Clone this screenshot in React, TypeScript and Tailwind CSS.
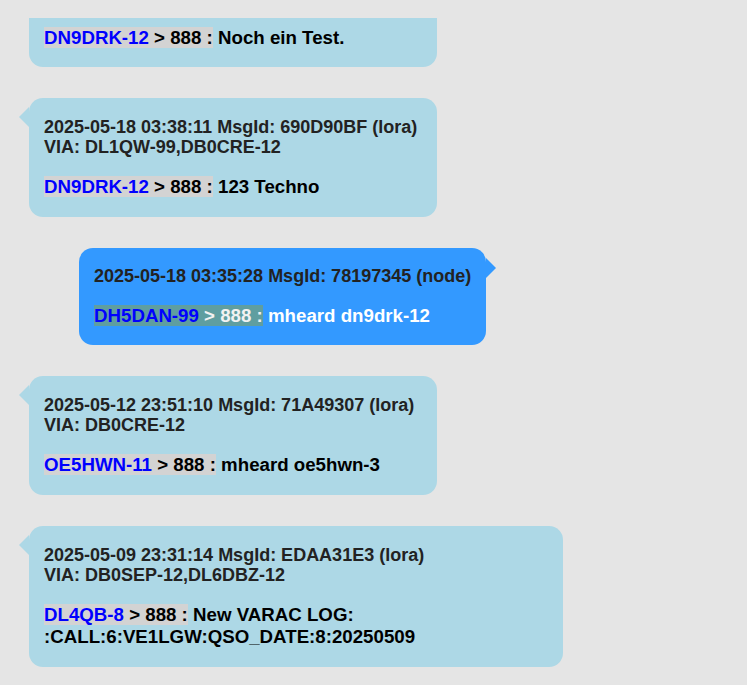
type Msg = {
  id: string;
  header?: string[];
  call: string;
  text: string;
  mine?: boolean;
  width: string;
};

const messages: Msg[] = [
  {
    id: "m2",
    header: ["2025-05-18 03:38:11 MsgId: 690D90BF (lora)", "VIA: DL1QW-99,DB0CRE-12"],
    call: "DN9DRK-12",
    text: "123 Techno",
    width: "w-[408px]",
  },
  {
    id: "m3",
    header: ["2025-05-18 03:35:28 MsgId: 78197345 (node)"],
    call: "DH5DAN-99",
    text: "mheard dn9drk-12",
    mine: true,
    width: "w-[407px]",
  },
  {
    id: "m4",
    header: ["2025-05-12 23:51:10 MsgId: 71A49307 (lora)", "VIA: DB0CRE-12"],
    call: "OE5HWN-11",
    text: "mheard oe5hwn-3",
    width: "w-[408px]",
  },
  {
    id: "m5",
    header: ["2025-05-09 23:31:14 MsgId: EDAA31E3 (lora)", "VIA: DB0SEP-12,DL6DBZ-12"],
    call: "DL4QB-8",
    text: "New VARAC LOG: :CALL:6:VE1LGW:QSO_DATE:8:20250509",
    width: "w-[534px]",
  },
];

function Line({ call, text, mine }: { call: string; text: string; mine?: boolean }) {
  return (
    <p className={`text-[18.7px] leading-[22px] font-bold ${mine ? "text-white" : "text-black"}`}>
      <span className={mine ? "bg-[#5f9ea0] text-[#f2f2f2]" : "bg-[#d3d3d3]"}>
        <span className="text-[#0000ff]">{call}</span> &gt; 888 :
      </span>{" "}
      {text}
    </p>
  );
}

function Bubble({ m }: { m: Msg }) {
  return (
    <div
      className={`relative ${m.width} rounded-[14px] px-[15px] ${
        m.mine ? "ml-[50px] bg-[#3399ff] pt-[18px] pb-[18px]" : "bg-[#add8e6] pt-[19px] pb-[19px]"
      }`}
    >
      {/* tail */}
      {m.mine ? (
        <span className="absolute right-[-10px] top-[10px] w-0 h-0 border-y-[10px] border-y-transparent border-l-[10px] border-l-[#3399ff]" />
      ) : (
        <span className="absolute left-[-10px] top-[9px] w-0 h-0 border-y-[10px] border-y-transparent border-r-[10px] border-r-[#add8e6]" />
      )}
      <div className="text-[18px] leading-[20px] font-bold text-[#222] whitespace-nowrap">
        {m.header?.map((h) => (
          <p key={h}>{h}</p>
        ))}
      </div>
      <div className="mt-[19px]">
        <Line call={m.call} text={m.text} mine={m.mine} />
      </div>
    </div>
  );
}

export default function App() {
  return (
    <div className="h-[685px] w-[747px] overflow-hidden bg-[#e5e5e5] pt-[18px] font-['Liberation_Sans',Arial,sans-serif]">
      <div className="flex flex-col items-start gap-[31px] pl-[29px]">
        {/* first message is scrolled partly out of view */}
        <div className="w-[408px] h-[49px] rounded-b-[14px] bg-[#add8e6] px-[15px] pt-[9px]">
          <Line call="DN9DRK-12" text="Noch ein Test." />
        </div>
        {messages.map((m) => (
          <Bubble key={m.id} m={m} />
        ))}
      </div>
    </div>
  );
}
